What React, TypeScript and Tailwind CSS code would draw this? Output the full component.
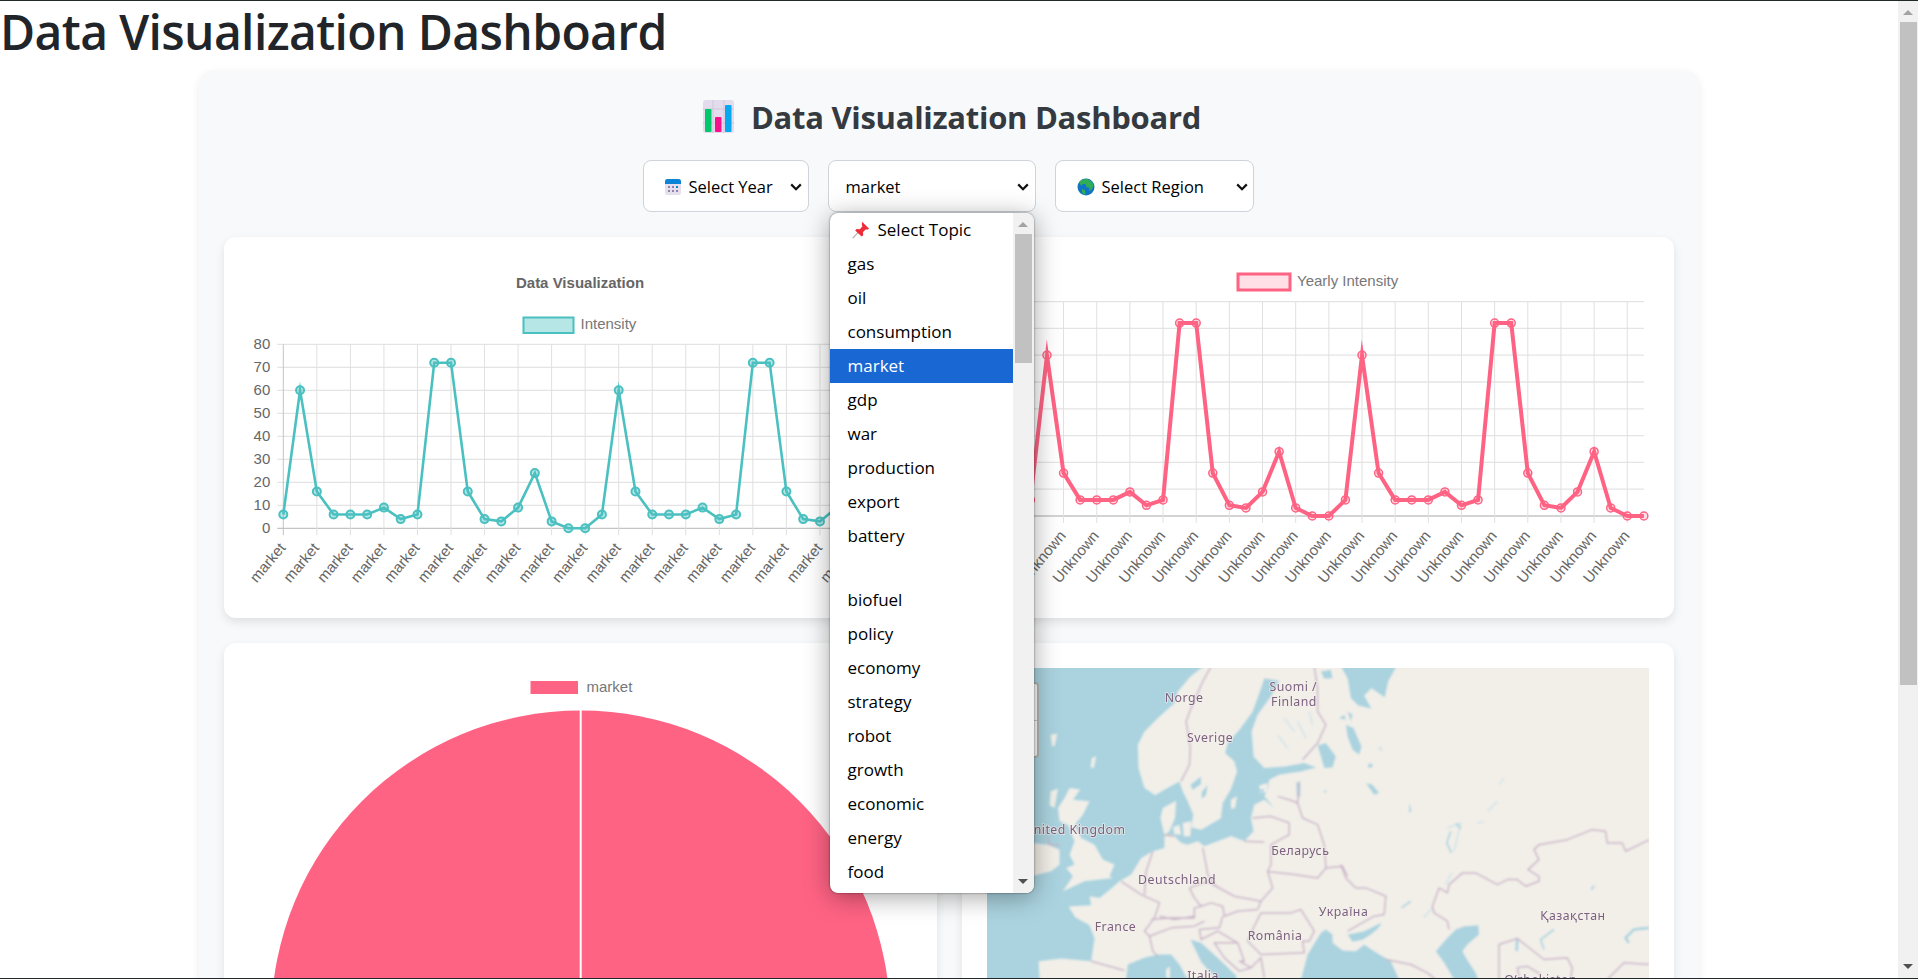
const market = [6, 60, 16, 6, 6, 6, 9, 4, 6, 72, 72, 16, 4, 3, 9, 24, 3, 0, 0];
const values = Array.from({ length: 38 }, (_, i) => market[i % 19]);

const topics = [
  "gas", "oil", "consumption", "market", "gdp", "war", "production", "export", "battery", "",
  "biofuel", "policy", "economy", "strategy", "robot", "growth", "economic", "energy", "food",
];

const chartFont = "'Liberation Sans', Arial, sans-serif";

const Chevron = () => (
  <svg width="12" height="8" viewBox="0 0 12 8" className="shrink-0">
    <path d="M1.2 1.4 6 6.2l4.8-4.8" fill="none" stroke="#111" strokeWidth="2.2" />
  </svg>
);

const ChartEmoji = () => (
  <svg width="33" height="33" viewBox="0 0 33 33" className="shrink-0">
    <rect x="1" y="0" width="31" height="33" rx="3" fill="#e3dcec" />
    <path d="M1 9h31M1 23h31M11 0v33M22 0v33" stroke="#cfc6dc" strokeWidth="1" />
    <rect x="3" y="9" width="6.5" height="23" rx="1" fill="#00c96b" />
    <rect x="13" y="17" width="6.5" height="15" rx="1" fill="#f6108c" />
    <rect x="23" y="5" width="6.5" height="27" rx="1" fill="#06a8f0" />
  </svg>
);

const CalendarEmoji = () => (
  <svg width="18" height="18" viewBox="0 0 18 18" className="shrink-0">
    <rect x="1" y="1" width="16" height="16" rx="2.5" fill="#e6e0ee" />
    <path d="M1 6V3.500A2.500 2.500 0 0 1 3.500 1h11A2.500 2.500 0 0 1 17 3.500V6z" fill="#0b83d6" />
    <g fill="#8d84a8">
      <rect x="4" y="8" width="2" height="2" />
      <rect x="8" y="8" width="2" height="2" />
      <rect x="12" y="8" width="2" height="2" fill="#0b83d6" />
      <rect x="4" y="12" width="2" height="2" />
      <rect x="8" y="12" width="2" height="2" />
      <rect x="12" y="12" width="2" height="2" />
    </g>
  </svg>
);

const GlobeEmoji = () => (
  <svg width="18" height="18" viewBox="0 0 18 18" className="shrink-0">
    <circle cx="9" cy="9" r="8.500" fill="#1173c4" />
    <path d="M5 1.800 10 .8l5 3 1.500 4-2 4-2.500 1 .5-3-3-.5-1-3-2-.5-2.500 2L2 4z" fill="#2fae57" />
    <path d="M5 11l3 1 .5 4-2 1-1.500-3z" fill="#2fae57" />
  </svg>
);

const PinEmoji = () => (
  <svg width="18" height="18" viewBox="0 0 17 17" className="shrink-0">
    <path d="M.8 16.200 6 10.500" stroke="#b9b4b4" strokeWidth="1.300" />
    <path d="M9.500 .8l6.700 6.500-2 1-1-.5-2.800 2.600.2 3-1.500 1.300L3 9l1.400-1.400 3 .2 2.500-2.800-.6-1.200z" fill="#ee2b38" />
  </svg>
);

const LineChart = ({
  x0, dx, y0, unit, ticks, color, fill, width, radius, pointWidth, label, legend, legendBox, title,
}: {
  x0: number; dx: number; y0: number; unit: number; ticks: boolean; color: string; fill: string;
  width: number; radius: number; pointWidth: number; label: string; legend: string;
  legendBox: [number, number, number, number]; title?: string;
}) => {
  const xs = values.map((_, i) => x0 + i * dx);
  const ys = values.map((v) => y0 - v * unit);
  const right = xs[xs.length - 1];
  const steps = [0, 10, 20, 30, 40, 50, 60, 70, 80];
  return (
    <svg viewBox="0 0 662.500 331" className="block w-full h-[331px]" style={{ fontFamily: chartFont }}>
      {title && (
        <text x="331" y="25.500" textAnchor="middle" fontSize="15" fontWeight="700" fill="#666">
          {title}
        </text>
      )}
      <rect x={legendBox[0]} y={legendBox[1]} width={legendBox[2]} height={legendBox[3]} fill={fill} stroke={color} strokeWidth={width < 3 ? 2 : 3} />
      <text x={legendBox[0] + legendBox[2] + 7} y={legendBox[1] + legendBox[3] / 2 + 3.5} fontSize="15" fill="#777">
        {legend}
      </text>
      {steps.map((s) => (
        <g key={s}>
          <line x1={x0 - 6} x2={right} y1={y0 - s * unit} y2={y0 - s * unit} stroke={s === 0 ? "#c4c4c4" : "#e4e4e4"} strokeWidth="1.300" />
          {ticks && (
            <text x={x0 - 13} y={y0 - s * unit + 5} textAnchor="end" fontSize="15" fill="#666">
              {s}
            </text>
          )}
        </g>
      ))}
      {xs.map((x, i) =>
        i % 2 === 0 ? (
          <g key={i}>
            <line x1={x} x2={x} y1={y0 - 80 * unit} y2={y0 + 7} stroke={i === 0 ? "#c4c4c4" : "#e0e0e0"} strokeWidth="1" />
            <text x={x + 3} y={y0 + 20} textAnchor="end" fontSize="15" fill="#666" transform={`rotate(-50 ${x + 3} ${y0 + 20})`}>
              {label}
            </text>
          </g>
        ) : null
      )}
      <polyline
        points={xs.map((x, i) => `${x},${ys[i]}`).join(" ")}
        fill="none"
        stroke={color}
        strokeWidth={width}
        strokeLinejoin="miter"
        strokeMiterlimit="10"
      />
      {xs.map((x, i) => (
        <circle key={i} cx={x} cy={ys[i]} r={radius} fill={fill} stroke={color} strokeWidth={pointWidth} />
      ))}
    </svg>
  );
};

const PieCard = () => (
  <svg viewBox="0 0 662.500 680" className="block w-full h-[680px]" style={{ fontFamily: chartFont }}>
    <rect x="281.500" y="13" width="47.500" height="13" fill="#ff6384" />
    <text x="337.500" y="24" fontSize="15" fill="#777">market</text>
    <circle cx="331.700" cy="352" r="309.500" fill="#ff6384" />
    <line x1="331.700" x2="331.700" y1="42" y2="352" stroke="#fff" strokeWidth="2" />
  </svg>
);

const MapLabel = ({ x, y, children, anchor = "middle" }: { x: number; y: number; children: string; anchor?: "middle" | "end" }) => (
  <text
    x={x}
    y={y}
    textAnchor={anchor}
    fontSize="37"
    letterSpacing="1.500"
    fontFamily="'Noto Sans', sans-serif"
    fill="#7d607f"
    stroke="#f4f1ec"
    strokeWidth="5"
    paintOrder="stroke"
    strokeOpacity="0.7"
  >
    {children}
  </text>
);

// map traced in 3x units, x = 0 sits 44px in from the map's left edge
const MapPanel = () => (
  <div className="relative h-[680px] overflow-hidden bg-[#aad3df]">
    <svg viewBox="-133 0 1990 930" className="block w-full h-[310px]">
      <defs>
        <filter id="soft" x="-5%" y="-5%" width="110%" height="110%">
          <feGaussianBlur stdDeviation="2.400" />
        </filter>
        <filter id="softText">
          <feGaussianBlur stdDeviation="0.900" />
        </filter>
      </defs>
      <rect x="-133" y="0" width="1990" height="930" fill="#aad3df" />
      <g filter="url(#soft)">
        {/* mainland */}
        <path
          fill="#f2efe9"
          d="M535 -10 510 0 478 25 440 70 430 105 385 145 340 190 320 230 322 300 340 360 372 382 405 362 445 340 450 400 445 500 400 500 400 540 365 550 330 570 300 620 265 640 240 662 205 690 175 685 180 712 112 716 132 748 175 772 190 812 180 880 90 872 22 880 25 935 285 935 290 890 340 870 380 860 420 860 445 890 470 935 1900 935 1900 -10 Z"
        />
        {/* baltic and bothnia */}
        <path
          fill="#aad3df"
          d="M445 340 455 370 470 400 487 440 480 478 510 485 545 465 570 450 572 410 600 362 618 310 610 280 582 255 590 225 625 185 665 130 690 60 700 30 745 38 720 85 680 140 662 190 668 265 700 300 760 295 820 285 856 298 810 310 745 320 715 335 710 365 700 385 730 420 700 395 670 410 660 450 668 490 640 520 600 505 520 535 500 520 470 530 450 525 430 505 440 470 445 400 Z"
        />
        {/* denmark, islands */}
        <path fill="#f2efe9" d="M395 420 435 398 432 450 415 490 400 502 388 450 Z" />
        <path fill="#f2efe9" d="M425 478 445 470 450 500 430 498 Z M455 465 480 460 478 505 458 505 Z" />
        <path fill="#f2efe9" d="M600 395 618 385 612 420 600 422 Z M566 412 575 410 568 445 562 445 Z M685 352 710 345 708 372 688 375 Z" />
        {/* adriatic, black sea, azov, caspian */}
        <path fill="#aad3df" d="M478 815 510 825 560 870 618 925 612 935 555 935 510 882 Z" />
        <path fill="#aad3df" d="M810 935 830 860 870 795 885 785 905 800 905 825 935 848 975 850 1000 830 1030 850 1080 880 1105 935 Z" />
        <path fill="#aad3df" d="M950 800 1000 790 1052 765 1045 778 1020 800 995 816 965 822 Z" />
        <path fill="#aad3df" d="M1215 850 1250 810 1275 785 1300 775 1343 772 1345 800 1310 830 1295 850 1312 880 1335 915 1342 935 1270 935 1240 885 Z" />
        {/* white sea */}
        <path fill="#aad3df" d="M930 -5 1097 -5 1072 40 1062 88 1022 60 1000 82 1022 122 982 112 960 90 950 30 Z" />
        {/* uk, ireland, small islands */}
        <path
          fill="#f2efe9"
          d="M115 360 147 364 125 395 175 400 155 440 130 472 150 510 190 530 215 575 250 590 235 625 245 630 160 640 95 670 125 625 105 600 130 590 115 560 130 520 110 470 85 460 80 420 100 390 Z"
        />
        <path fill="#f2efe9" d="M-40 520 50 530 85 545 85 590 60 610 0 625 -40 620 Z" />
        <path fill="#f2efe9" d="M58 200 78 197 70 235 62 232 Z M182 270 195 265 188 300 178 298 Z M58 370 80 362 70 420 55 412 Z" />
        <path fill="#f2efe9" d="M405 905 416 895 417 930 405 930 Z" />
        {/* lakes */}
        <path
          fill="#aad3df"
          d="M860 232 885 225 915 265 905 298 880 300 870 265 Z M796 342 808 345 808 388 798 385 Z M478 350 510 325 510 348 485 366 Z M512 372 530 350 525 382 512 392 Z M635 285 650 282 648 296 Z M685 365 700 362 695 376 Z M875 368 888 368 885 375 Z"
        />
        <path
          fill="#aad3df"
          d="M945 170 968 180 992 235 985 260 965 245 950 205 Z M1012 288 1025 286 1024 298 1012 298 Z M1005 345 1025 350 1045 375 1030 380 Z M1135 405 1142 430 1135 435 Z"
        />
        <path
          fill="#aad3df"
          d="M870 10 900 5 905 30 880 32 Z M925 150 940 140 945 155 Z M950 130 965 140 960 160 Z M1045 240 1050 235 1052 250 Z"
        />
        <path
          fill="none"
          stroke="#d3e4e8"
          strokeWidth="5"
          d="M760 150 790 190 M800 160 825 210 M740 200 770 240 M835 130 845 170 M1405 350 1420 330 M1370 430 1400 400 M1250 480 1290 465 1270 550 M1245 650 1262 615 M1178 750 1205 720 M1340 465 1360 462"
        />
        <path
          fill="none"
          stroke="#aad3df"
          strokeWidth="5"
          d="M1260 490 1248 525 1262 555 M1275 465 1290 482 M1112 720 1140 700 M1540 845 1530 815 1570 785"
        />
        <path fill="none" stroke="#aad3df" strokeWidth="8" d="M1855 780 1810 785 1785 810 1795 825 M1460 810 1458 850" />
        <path fill="#aad3df" d="M1680 660 1695 650 1685 668 Z" />
        {/* borders */}
        <g fill="none" stroke="#c9b4c8" strokeWidth="4.500" strokeLinejoin="round">
          <path d="M540 -5 515 40 480 120 465 160 478 240 475 290 450 340" />
          <path d="M850 -5 860 60 860 130 885 170 860 225 815 275" />
          <path d="M740 385 775 395 800 405 815 450 860 470 880 530 885 600 860 630 780 618 720 612 710 610 720 590 720 530 775 500 775 465 720 445 665 450" />
          <path d="M640 520 700 522 M800 405 805 340 M885 600 935 595 950 625" />
          <path d="M515 540 525 590 530 620 555 655 610 685 690 700 725 660 710 610" />
          <path d="M475 660 490 690 510 715 540 705 575 715 580 745 620 730 680 725 690 700" />
          <path d="M475 660 530 640 555 655 M690 735 665 785 650 820 690 860 820 855 815 820 835 820 850 790 810 725 780 735 690 735" />
          <path d="M575 745 565 780 505 785 510 815 560 790 620 825 550 825 580 870 625 910 660 900 690 870 700 930" />
          <path d="M620 825 640 880 625 880 660 900" />
          <path d="M270 640 330 680 385 705 370 750 340 790 355 805 420 780 490 775 520 760" />
          <path d="M365 550 345 610 340 680 M360 755 415 750 490 750 490 720 510 715 M385 745 430 755 490 745" />
          <path d="M355 805 365 850 380 865 M180 880 280 908 M395 500 430 505 M50 505 55 530 85 530" />
          <path d="M930 590 945 630 975 660 1005 660 1065 685 1060 740 1030 745 950 790" />
          <path d="M1065 875 1140 890 1190 915 1215 935" />
          <path d="M1255 785 1250 760 1210 735 1205 715 1225 660 1250 675 1255 650 1295 615 1335 615 1400 650 1430 635 1460 635 1485 655 1525 640 1525 625 1492 605 1525 575 1510 545 1525 530 1610 515 1685 485 1725 490 1730 525 1775 525 1785 550 1857 515" />
          <path d="M1405 935 1405 830 1460 812 1540 875 1610 870 1625 900 1620 935" />
          <path d="M1730 935 1780 885 1857 890 M1465 925 1460 900 1490 895 1530 920" />
        </g>
      </g>
      <g filter="url(#softText)">
        <MapLabel x={459} y={103}>Norge</MapLabel>
        <MapLabel x={787} y={70}>Suomi /</MapLabel>
        <MapLabel x={789} y={114}>Finland</MapLabel>
        <MapLabel x={537} y={221}>Sverige</MapLabel>
        <MapLabel x={283} y={498} anchor="end">United Kingdom</MapLabel>
        <MapLabel x={438} y={648}>Deutschland</MapLabel>
        <MapLabel x={808} y={560}>Беларусь</MapLabel>
        <MapLabel x={253} y={788}>France</MapLabel>
        <MapLabel x={732} y={816}>România</MapLabel>
        <MapLabel x={938} y={743}>Україна</MapLabel>
        <MapLabel x={1627} y={755}>Қазақстан</MapLabel>
        <MapLabel x={516} y={938}>Italia</MapLabel>
        <MapLabel x={1530} y={950}>Oʻzbekiston</MapLabel>
      </g>
    </svg>
    <div className="absolute left-[13px] top-[14px] w-[39px] h-[76px] rounded-[4px] border-2 border-[#b5b5b5] bg-white flex flex-col">
      <div className="flex-1 border-b border-[#ccc]" />
      <div className="flex-1" />
    </div>
  </div>
);

const TopicMenu = () => (
  <div className="absolute left-px top-[52px] z-50 w-[204px] h-[680px] flex overflow-hidden rounded-[8px] bg-white text-[17px] shadow-[0_0_2px_rgba(0,0,0,0.6),0_4px_26px_rgba(0,0,0,0.36)]">
    <div className="flex-1 min-w-0">
      <div className="h-[34px] pl-[22px] flex items-center gap-[8px] text-black">
        <PinEmoji />
        Select Topic
      </div>
      {topics.map((t, i) => (
        <div
          key={i}
          className={`${t === "" ? "h-[30px]" : "h-[34px]"} px-[18px] flex items-center ${t === "market" ? "bg-[#1967d2] text-white" : "text-black"}`}
        >
          {t}
        </div>
      ))}
    </div>
    <div className="w-[21px] shrink-0 bg-[#f1f1f1] relative flex flex-col items-center justify-between py-[9px]">
      <div className="w-0 h-0 border-x-[5px] border-x-transparent border-b-[5px] border-b-[#a3a3a3]" />
      <div className="absolute left-[2px] right-[2px] top-[21px] h-[129px] bg-[#c1c1c1]" />
      <div className="w-0 h-0 border-x-[5px] border-x-transparent border-t-[5px] border-t-[#505050]" />
    </div>
  </div>
);

const App = () => {
  return (
    <div className="h-screen overflow-hidden flex flex-col bg-white text-[#212529] font-['Open_Sans',sans-serif]">
      <div className="h-px shrink-0 bg-[#20282a]" />
      <div className="flex-1 min-h-0 flex">
        <div className="flex-1 min-w-0 overflow-hidden">
          <h1 className="pt-[2px] mb-[9px] text-[48px] leading-[1.2] font-semibold tracking-[-0.62px]">Data Visualization Dashboard</h1>
          <div className="mx-auto w-[1500px] rounded-[15px] bg-[#f8f9fa] px-[25px] pt-[28px] pb-[25px] shadow-[0_4px_10px_rgba(0,0,0,0.08)]">
            <h2 className="flex items-center justify-center gap-[16px] pl-[5px] text-[31px] leading-[38.4px] font-bold tracking-[-0.28px] text-[#343a40] mb-[24px]">
              <ChartEmoji />
              Data Visualization Dashboard
            </h2>
            <div className="flex justify-center gap-[19px] pr-[2px] mb-[25px] text-[16.5px] text-black">
              <div className="w-[166px] h-[52px] pt-[2px] rounded-[8px] border border-[#ced4da] bg-white flex items-center pl-[20px] pr-[6px] gap-[7px]">
                <CalendarEmoji />
                <span className="flex-1">Select Year</span>
                <Chevron />
              </div>
              <div className="relative w-[208px] h-[52px] pt-[2px] rounded-[8px] border border-[#ced4da] bg-white flex items-center pl-[17px] pr-[6px]">
                <span className="flex-1">market</span>
                <Chevron />
                <TopicMenu />
              </div>
              <div className="w-[199px] h-[52px] pt-[2px] rounded-[8px] border border-[#ced4da] bg-white flex items-center pl-[21px] pr-[5px] gap-[7px]">
                <GlobeEmoji />
                <span className="flex-1">Select Region</span>
                <Chevron />
              </div>
            </div>
            <div className="grid grid-cols-2 gap-[25px]">
              <div className="rounded-[12px] bg-white p-[25px] shadow-[0_4px_10px_rgba(0,0,0,0.1)]">
                <LineChart
                  x0={34.3}
                  dx={16.77}
                  y0={266.3}
                  unit={2.3}
                  ticks
                  color="#4bc0c0"
                  fill="rgba(75,192,192,0.4)"
                  width={2.6}
                  radius={4}
                  pointWidth={2}
                  label="market"
                  legend="Intensity"
                  legendBox={[274.5, 55.5, 50, 15.5]}
                  title="Data Visualization"
                />
              </div>
              <div className="rounded-[12px] bg-white p-[25px] shadow-[0_4px_10px_rgba(0,0,0,0.1)]">
                <LineChart
                  x0={43.4}
                  dx={16.58}
                  y0={254}
                  unit={2.68}
                  ticks={false}
                  color="#ff6384"
                  fill="rgba(255,99,132,0.2)"
                  width={4}
                  radius={4}
                  pointWidth={1.5}
                  label="Unknown"
                  legend="Yearly Intensity"
                  legendBox={[251, 12, 52, 16]}
                />
              </div>
              <div className="rounded-[12px] bg-white p-[25px] shadow-[0_4px_10px_rgba(0,0,0,0.1)]">
                <PieCard />
              </div>
              <div className="rounded-[12px] bg-white p-[25px] shadow-[0_4px_10px_rgba(0,0,0,0.1)]">
                <MapPanel />
              </div>
            </div>
          </div>
        </div>
        <div className="w-5 shrink-0 bg-[#f1f1f1] relative flex flex-col items-center justify-between py-[9px]">
          <div className="w-0 h-0 border-x-[5px] border-x-transparent border-b-[5px] border-b-[#a3a3a3]" />
          <div className="absolute left-[2px] right-[1px] top-[21px] h-[663px] bg-[#c1c1c1]" />
          <div className="w-0 h-0 border-x-[5px] border-x-transparent border-t-[5px] border-t-[#505050]" />
        </div>
      </div>
      <div className="h-px shrink-0 bg-[#20282a]" />
    </div>
  );
};

export default App;
